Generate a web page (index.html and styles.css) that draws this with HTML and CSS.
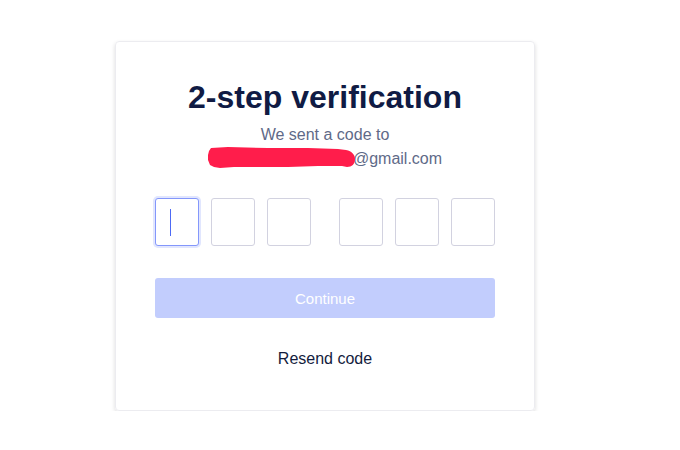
FILE: index.html
```html
<!DOCTYPE html>
<html>
<head>
<meta charset="utf-8">
<link rel="stylesheet" href="styles.css">
</head>
<body>
<div class="card">
  <h1 class="title">2-step verification</h1>
  <p class="sub">We sent a code to</p>
  <p class="sub email"><span class="redact"><svg width="148" height="21" viewBox="0 0 148 21"><path d="M3 1 L20 0 L60 1 L100 1 L130 2 L138 3 C144 4 147 8 147 12 C147 17 144 20 139 20 L134 19 L110 19 L80 20 L50 20 L26 20 L12 21 L6 20 L2 18 L0 13 L0 8 L1 4 Z" fill="#ff1d4b"/></svg></span>@gmail.com</p>
  <div class="code">
    <div class="group">
      <div class="box focus"><span class="caret"></span></div>
      <div class="box"></div>
      <div class="box"></div>
    </div>
    <div class="group">
      <div class="box"></div>
      <div class="box"></div>
      <div class="box"></div>
    </div>
  </div>
  <button class="btn">Continue</button>
  <div class="resend">Resend code</div>
</div>
</body>
</html>
```
FILE: styles.css
```css
html, body {
  margin: 0;
  padding: 0;
  background: #fff;
  font-family: "Liberation Sans", Arial, sans-serif;
}
body {
  padding: 41px 0 0 115px;
}
.card {
  box-sizing: border-box;
  width: 420px;
  height: 370px;
  padding: 37px 39px 40px;
  border: 1px solid #ececf0;
  border-radius: 4px;
  box-shadow: 0 2px 4px rgba(0, 0, 0, 0.14);
  display: flex;
  flex-direction: column;
  align-items: stretch;
}
.title {
  margin: 0 0 8px;
  font-size: 32px;
  line-height: 36px;
  font-weight: 700;
  color: #101b44;
  text-align: center;
}
.sub {
  margin: 0;
  font-size: 16px;
  line-height: 24px;
  color: #5f6a88;
  text-align: center;
}
.redact {
  display: inline-block;
  width: 145px;
  height: 16px;
  position: relative;
  vertical-align: -2px;
}
.redact svg {
  position: absolute;
  left: 0;
  top: -3px;
}
.code {
  margin-top: 27px;
  display: flex;
  gap: 28px;
}
.group {
  display: flex;
  gap: 12px;
}
.box {
  box-sizing: border-box;
  width: 44px;
  height: 48px;
  border: 1px solid #d2d2e0;
  border-radius: 3px;
  background: #fff;
  display: flex;
  align-items: center;
  padding-left: 14px;
}
.box.focus {
  border-color: #8497fb;
  box-shadow: 0 0 0 2px #e1e6fe;
}
.caret {
  width: 1px;
  height: 27px;
  background: #4d6af5;
}
.btn {
  flex: none;
  margin-top: 32px;
  height: 40px;
  border: none;
  border-radius: 3px;
  background: #c2cdfd;
  color: #fff;
  font-family: "Liberation Sans", Arial, sans-serif;
  font-size: 15px;
}
.resend {
  margin-top: 29px;
  font-size: 16px;
  line-height: 24px;
  color: #131c3d;
  text-align: center;
}
```
